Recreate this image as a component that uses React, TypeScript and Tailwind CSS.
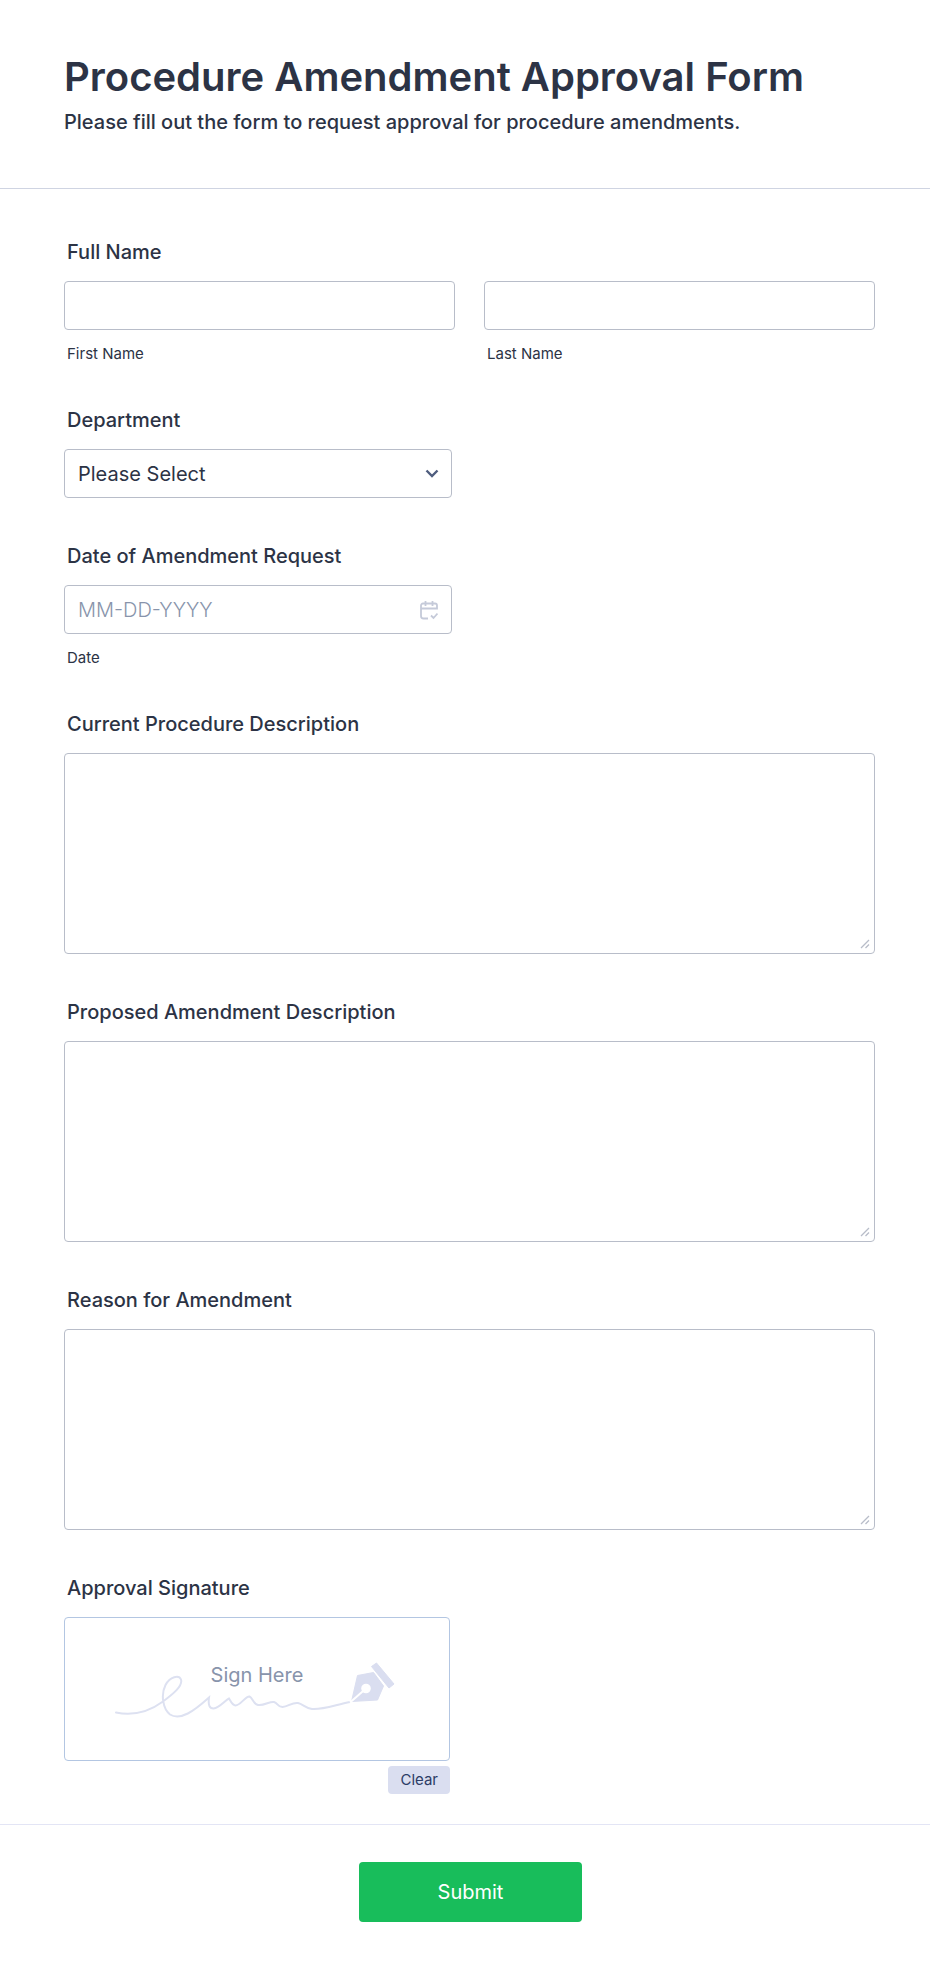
import { useState } from "react";
import type { ReactNode } from "react";

const control =
  "block w-full rounded border border-[#b8bdc9] bg-white text-xl text-[#2c3345] outline-none focus:border-blue-500";

function Label({ htmlFor, children }: { htmlFor: string; children: ReactNode }) {
  return (
    <label htmlFor={htmlFor} className="mb-[17px] block pl-[3px] text-xl leading-6 font-medium">
      {children}
    </label>
  );
}

function SubLabel({ htmlFor, children }: { htmlFor: string; children: ReactNode }) {
  return (
    <label htmlFor={htmlFor} className="mt-4 block pl-[3px] text-[15px] leading-4">
      {children}
    </label>
  );
}

function LongText({ id, label }: { id: string; label: string }) {
  return (
    <div>
      <Label htmlFor={id}>{label}</Label>
      <div className="relative">
        <textarea id={id} className={`${control} h-[201px] resize-none px-3 py-2`} />
        <svg
          aria-hidden="true"
          className="pointer-events-none absolute right-[5px] bottom-[5px] h-[10px] w-[10px]"
          viewBox="0 0 10 10"
          fill="none"
          stroke="#b8bdc9"
          strokeWidth="1.3"
        >
          <path d="M1 9 9 1M5.5 9 9 5.5" />
        </svg>
      </div>
    </div>
  );
}

function SignatureDrawing() {
  return (
    <svg aria-hidden="true" className="absolute top-[44px] left-[50px] h-[58px] w-[281px]" viewBox="0 0 281 58" fill="none">
      <path
        d="M1 50.500C18 54 33 50.500 48 39.500C58 32 68 24 66 17.500C64 12.500 55 14.500 50.500 23C45.500 33 48 47 55 52.500C65.500 59 79 49 94 35.500C93 43 94.500 46.500 98.500 46.500C104.500 46 110.500 38 114 36.500C116 40 117.500 43.500 120.500 43.500C125.500 43.500 130.500 34 134.500 34.500C138 36 138 42 143 43C149 44 155 39 159 40C163 41 162 44.500 167.500 45C173 45 177 40 183 41C188 42 190 46 197 47C207 48 220 43 235 40"
        stroke="#dde1f1"
        strokeWidth="2"
        strokeLinecap="round"
      />
      <path
        d="M242.500 13.500 258.500 10.500 268.500 24 262.500 38 236.500 39.500Z"
        fill="#dadef0"
        stroke="#dadef0"
        strokeLinejoin="round"
      />
      <path d="M235 40.500 251 26.500" stroke="#fff" strokeWidth="2" />
      <circle cx="251" cy="26.500" r="4.800" fill="#fff" />
      <path
        d="M256.500 4.500 261.500 1 279 22 274 26Z"
        fill="#dadef0"
        stroke="#dadef0"
        strokeLinejoin="round"
      />
    </svg>
  );
}

export default function App() {
  const [department, setDepartment] = useState("");

  return (
    <main className="min-h-screen bg-white font-['Inter',sans-serif] text-[#2c3345]">
      <form onSubmit={(event) => event.preventDefault()}>
        <header className="border-b border-[#cfd4e2] pt-[52px] pr-[55px] pb-[54px] pl-16">
          <h1 className="text-[40px] leading-[50px] font-semibold">Procedure Amendment Approval Form</h1>
          <p className="mt-2 text-xl leading-6 font-medium">
            Please fill out the form to request approval for procedure amendments.
          </p>
        </header>

        <div className="flex flex-col gap-[46px] pt-[51px] pr-[55px] pb-[30px] pl-16">
          <fieldset>
            <legend className="mb-[17px] pl-[3px] text-xl leading-6 font-medium">Full Name</legend>
            <div className="grid grid-cols-2 gap-[29px]">
              <div>
                <input id="first" type="text" className={`${control} h-[49px] px-3`} />
                <SubLabel htmlFor="first">First Name</SubLabel>
              </div>
              <div>
                <input id="last" type="text" className={`${control} h-[49px] px-3`} />
                <SubLabel htmlFor="last">Last Name</SubLabel>
              </div>
            </div>
          </fieldset>

          <div>
            <Label htmlFor="department">Department</Label>
            <div className="relative max-w-[388px]">
              <select
                id="department"
                value={department}
                onChange={(event) => setDepartment(event.target.value)}
                className={`${control} h-[49px] appearance-none pr-10 pl-[13px]`}
              >
                <option value="">Please Select</option>
              </select>
              <svg
                aria-hidden="true"
                className="pointer-events-none absolute top-[20px] right-[13px] h-[9px] w-[14px]"
                viewBox="0 0 14 9"
                fill="none"
                stroke="#4f5d7e"
                strokeWidth="2.4"
              >
                <path d="M1.500 1.500 7 7 12.500 1.500" />
              </svg>
            </div>
          </div>

          <div>
            <Label htmlFor="date">Date of Amendment Request</Label>
            <div className="relative max-w-[388px]">
              <input
                id="date"
                type="text"
                placeholder="MM-DD-YYYY"
                className={`${control} h-[49px] pr-12 pl-[13px] placeholder:font-light placeholder:text-[#8894ab]`}
              />
              <button type="button" aria-label="Choose a date" className="absolute top-[15px] right-[14px]">
                <svg
                  aria-hidden="true"
                  className="h-[20px] w-[18px]"
                  viewBox="0 0 18 20"
                  fill="none"
                  stroke="#c5cad9"
                  strokeWidth="1.800"
                >
                  <path d="M8 18.500H3.500a2.500 2.500 0 0 1-2.500-2.500V5.500A2 2 0 0 1 3 3.500h12a2 2 0 0 1 2 2V9.500M1 8.500h16M5.500 1v5M12.500 1v5M11 15.500l2.500 2.500 4-4.500" />
                </svg>
              </button>
            </div>
            <SubLabel htmlFor="date">Date</SubLabel>
          </div>

          <LongText id="current" label="Current Procedure Description" />
          <LongText id="proposed" label="Proposed Amendment Description" />
          <LongText id="reason" label="Reason for Amendment" />

          <div>
            <Label htmlFor="signature">Approval Signature</Label>
            <div className="flex max-w-[386px] flex-col items-end gap-[5px]">
              <button
                id="signature"
                type="button"
                className="relative h-[144px] w-full rounded border border-[#b3c6e2] pb-[29px] text-xl text-[#8894ab]"
              >
                <SignatureDrawing />
                <span className="relative">Sign Here</span>
              </button>
              <button type="button" className="h-7 rounded bg-[#dadef0] px-3 text-[15px] text-[#2c3c66]">
                Clear
              </button>
            </div>
          </div>
        </div>

        <footer className="flex justify-center border-t border-[#e3e5f5] pt-[37px] pr-[53px] pb-12 pl-16">
          <button type="submit" className="h-[60px] w-[223px] rounded bg-[#18bd5b] text-xl text-white">
            Submit
          </button>
        </footer>
      </form>
    </main>
  );
}
